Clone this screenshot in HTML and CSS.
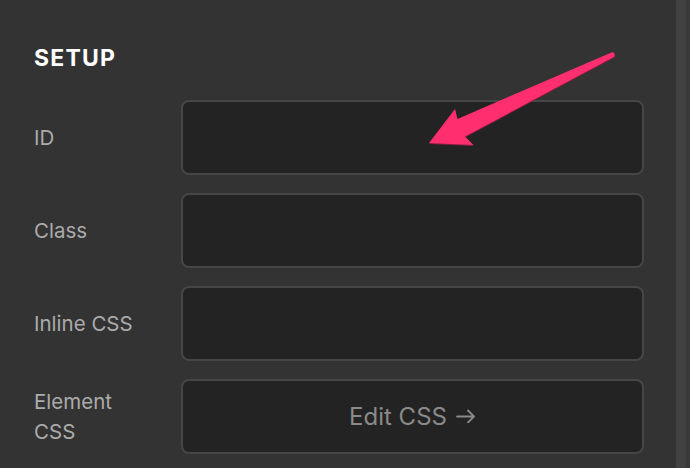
FILE: index.html
```html
<!DOCTYPE html>
<html lang="en">
<head>
<meta charset="utf-8">
<title>Setup</title>
<link rel="stylesheet" href="styles.css">
</head>
<body>
<div class="page">
  <main class="panel">
    <h2 class="title">SETUP</h2>
    <div class="form">
      <label class="label">ID</label>
      <div class="field"></div>
      <label class="label">Class</label>
      <div class="field"></div>
      <label class="label">Inline CSS</label>
      <div class="field"></div>
      <label class="label">Element CSS</label>
      <div class="field button">
        <span>Edit CSS</span>
        <svg class="go" width="20" height="14" viewBox="0 0 20 14"><path d="M1 7.5H18M12 1.5L18 7.5L12 13.5" fill="none" stroke="#8a8a8a" stroke-width="1.8" stroke-linecap="round" stroke-linejoin="round"/></svg>
      </div>
    </div>
  </main>
  <div class="scrollbar"></div>
</div>
<svg class="pointer" width="690" height="468" viewBox="0 0 690 468">
  <path d="M612 52.2 Q615.5 52.6 614.6 56.6 L465 136.5 L473.5 145 L429 143 L455 109 L457.5 119 Z" fill="#ff2e6f" />
</svg>
</body>
</html>
```
FILE: styles.css
```css
html, body {
  margin: 0;
  padding: 0;
  background: #333333;
  font-family: Inter, "Noto Sans", sans-serif;
}
.page {
  display: flex;
  width: 690px;
  height: 468px;
  overflow: hidden;
}
.panel {
  flex: 1;
  padding: 46px 32px 0 34px;
}
.title {
  margin: 0 0 30px;
  font-size: 23px;
  line-height: 24px;
  font-weight: 700;
  letter-spacing: 1.2px;
  color: #ffffff;
}
.form {
  display: grid;
  grid-template-columns: 147px 1fr;
  grid-auto-rows: 75px;
  row-gap: 18px;
}
.label {
  align-self: center;
  max-width: 110px;
  font-size: 20.5px;
  line-height: 30px;
  color: #ababab;
}
.field {
  box-sizing: border-box;
  border: 2px solid #464646;
  border-radius: 8px;
  background: #232323;
}
.button {
  display: flex;
  align-items: center;
  justify-content: center;
  gap: 9px;
  font-size: 24px;
  color: #8a8a8a;
}
.go {
  margin-top: -2px;
}
.scrollbar {
  width: 10px;
  background: #424242;
  border-right: 4px solid #393939;
}
.pointer {
  position: absolute;
  top: 0;
  left: 0;
  pointer-events: none;
  filter: drop-shadow(0 1px 0 #8a1d40);
}
```
